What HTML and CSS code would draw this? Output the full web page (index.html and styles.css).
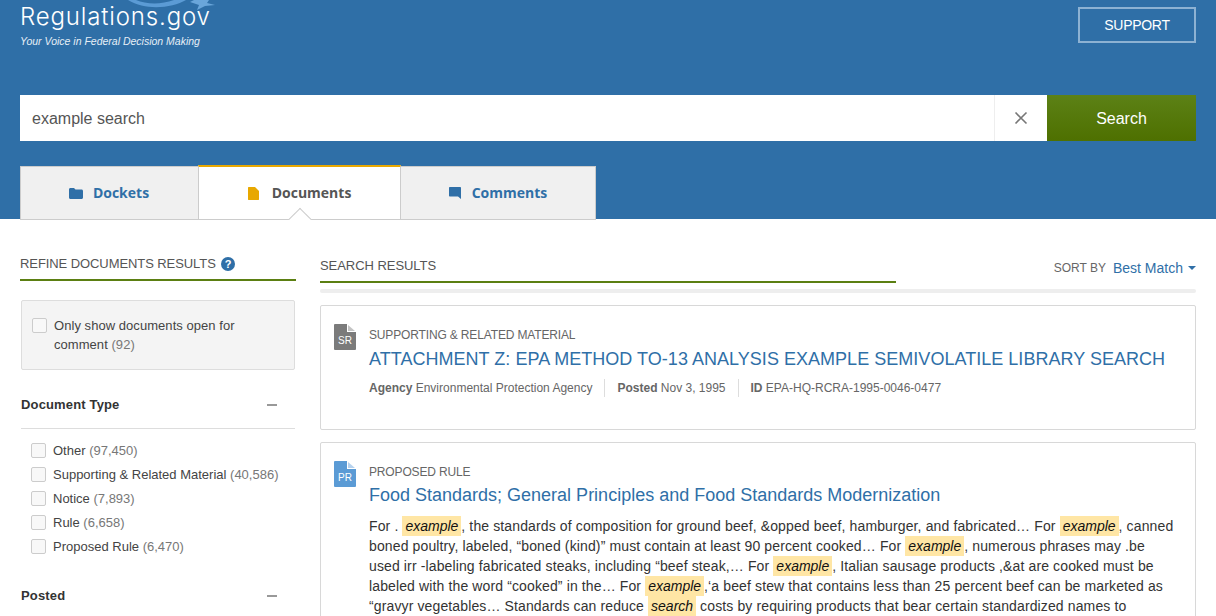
FILE: index.html
```html
<!DOCTYPE html>
<html lang="en">
<head>
<meta charset="utf-8">
<title>Regulations.gov</title>
<link rel="stylesheet" href="styles.css">
</head>
<body>
<header class="hero">
  <div class="topbar">
    <div class="logo">
      <svg class="logo-art" width="88" height="11" viewBox="0 0 88 11"><path d="M0 0H8C18 4 32 5 46 0H58C44 8 18 11 0 0Z" fill="#5b9bd5"/><path d="M66 0H81L79 3L87 5L77 6L69 10L71 5L62 2Z" fill="#6aa6da"/></svg>
      <div class="logo-name">Regulations.gov</div>
      <div class="logo-tag">Your Voice in Federal Decision Making</div>
    </div>
    <a class="support">SUPPORT</a>
  </div>
  <div class="searchbar">
    <div class="search-input">example search</div>
    <div class="search-clear"><svg width="14" height="14" viewBox="0 0 14 14"><path d="M1.500 1.500L12.500 12.500M12.500 1.500L1.500 12.500" stroke="#777" stroke-width="1.600" fill="none"/></svg></div>
    <div class="search-btn">Search</div>
  </div>
  <nav class="tabs">
    <a class="tab tab-dockets">
      <svg width="14" height="11" viewBox="0 0 14 11"><path d="M0 1.500C0 .7.6 0 1.400 0H5l1.500 1.600h6C13.400 1.600 14 2.300 14 3v6.500c0 .8-.6 1.500-1.500 1.500h-11C.6 11 0 10.300 0 9.500Z" fill="#2f6fa7"/></svg>
      <span class="tab-label">Dockets</span>
    </a>
    <a class="tab tab-active">
      <svg width="11" height="13" viewBox="0 0 11 13"><path d="M0 .5C0 .2.2 0 .5 0H7L11 4V12.500C11 12.800 10.800 13 10.500 13H.5C.2 13 0 12.800 0 12.500Z" fill="#e8a800"/></svg>
      <span class="tab-label">Documents</span>
    </a>
    <a class="tab tab-comments">
      <svg width="12" height="12" viewBox="0 0 12 12"><path d="M1 0H11C11.600 0 12 .4 12 1V12L9 9.500H1C.4 9.500 0 9.100 0 8.500V1C0 .4.4 0 1 0Z" fill="#2f6fa7"/></svg>
      <span class="tab-label">Comments</span>
    </a>
  </nav>
</header>
<main class="content">
  <aside class="sidebar">
    <h2 class="side-title">REFINE DOCUMENTS RESULTS
      <svg width="14" height="14" viewBox="0 0 14 14"><circle cx="7" cy="7" r="7" fill="#2f6fa7"/><text x="7" y="11" text-anchor="middle" class="help-mark">?</text></svg>
    </h2>
    <label class="open-box"><span class="check"></span><span>Only show documents open for comment <span class="count">(92)</span></span></label>
    <div class="facet-head"><span>Document Type</span><span class="minus"></span></div>
    <ul class="facet-list">
      <li><span class="check"></span><span>Other <span class="count">(97,450)</span></span></li>
      <li><span class="check"></span><span>Supporting &amp; Related Material <span class="count">(40,586)</span></span></li>
      <li><span class="check"></span><span>Notice <span class="count">(7,893)</span></span></li>
      <li><span class="check"></span><span>Rule <span class="count">(6,658)</span></span></li>
      <li><span class="check"></span><span>Proposed Rule <span class="count">(6,470)</span></span></li>
    </ul>
    <div class="facet-head facet-plain"><span>Posted</span><span class="minus"></span></div>
  </aside>
  <section class="results">
    <div class="results-head">
      <h2 class="results-title">SEARCH RESULTS</h2>
      <div class="sort"><span class="sort-label">SORT BY</span><a class="sort-value">Best Match</a><span class="caret"></span></div>
    </div>
    <div class="results-rule"></div>
    <article class="card card-short">
      <div class="doc-icon doc-sr"><span class="doc-code">SR</span></div>
      <div class="card-body">
        <div class="doc-type">SUPPORTING &amp; RELATED MATERIAL</div>
        <a class="doc-title">ATTACHMENT Z: EPA METHOD TO-13 ANALYSIS EXAMPLE SEMIVOLATILE LIBRARY SEARCH</a>
        <div class="meta">
          <span><b>Agency</b> Environmental Protection Agency</span>
          <span><b>Posted</b> Nov 3, 1995</span>
          <span><b>ID</b> EPA-HQ-RCRA-1995-0046-0477</span>
        </div>
      </div>
    </article>
    <article class="card">
      <div class="doc-icon doc-pr"><span class="doc-code">PR</span></div>
      <div class="card-body">
        <div class="doc-type">PROPOSED RULE</div>
        <a class="doc-title">Food Standards; General Principles and Food Standards Modernization</a>
        <p class="snippet">For . <mark>example</mark>, the standards of composition for ground beef, &amp;opped beef, hamburger, and fabricated… For <mark>example</mark>, canned boned poultry, labeled, “boned (kind)” must contain at least 90 percent cooked… For <mark>example</mark>, numerous phrases may .be used irr -labeling fabricated steaks, including “beef steak,… For <mark>example</mark>, Italian sausage products ,&amp;at are cooked must be labeled with the word “cooked” in the… For <mark>example</mark>,‘a beef stew that contains less than 25 percent beef can be marketed as “gravyr vegetables… Standards can reduce <mark>search</mark> costs by requiring products that bear certain standardized names to</p>
      </div>
    </article>
  </section>
</main>
</body>
</html>
```
FILE: styles.css
```css
* { box-sizing: border-box; }
html, body { margin: 0; height: 616px; overflow: hidden; }
body { font-family: "Liberation Sans", Arial, sans-serif; color: #333; background: #fff; }
a { color: inherit; text-decoration: none; }
h2, ul, p { margin: 0; padding: 0; }
ul { list-style: none; }

.hero { background: #2f6fa7; height: 219px; padding: 0 20px; }
.topbar { display: flex; justify-content: space-between; height: 95px; }
.logo { position: relative; color: #fff; padding-top: 1px; }
.logo-art { position: absolute; left: 108px; top: 0; }
.logo-name { position: relative; font-family: "Inter", sans-serif; font-weight: 300; font-size: 24px; letter-spacing: .85px; line-height: 32px; }
.logo-tag { font-size: 10.500px; font-style: italic; line-height: 13px; margin-top: 2px; color: #e6eef6; }
.support { margin-top: 7px; width: 118px; height: 36px; border: 2px solid #8db2d3; color: #fff; font-size: 14px; letter-spacing: -.3px; display: flex; align-items: center; justify-content: center; }

.searchbar { display: flex; height: 46px; }
.search-input { flex: 1; background: #fff; font-size: 16px; color: #555; display: flex; align-items: center; padding: 2px 0 0 12px; }
.search-clear { width: 53px; background: #fff; border-left: 1px solid #eee; display: flex; align-items: center; justify-content: center; }
.search-btn { width: 149px; background: linear-gradient(#5c8116, #4e7000); color: #fff; font-size: 16px; padding-top: 2px; display: flex; align-items: center; justify-content: center; }

.tabs { display: flex; margin-top: 25px; }
.tab { height: 54px; background: #f0f0f0; border: 1px solid #ccc; display: flex; align-items: center; justify-content: center; gap: 10px; color: #2f6fa7; font-family: "Open Sans", sans-serif; font-weight: 700; font-size: 14px; }
.tab-label { margin-bottom: 2px; }
.tab-dockets { width: 178px; border-right: 0; padding-right: 1px; }
.tab-active { width: 203px; height: 55px; margin-top: -1px; background: #fff; color: #555; border-top: 2px solid #e8a800; position: relative; gap: 13px; }
.tab-active::after { content: ""; position: absolute; left: 93px; bottom: -8px; width: 15px; height: 15px; background: #fff; border-left: 1px solid #ccc; border-top: 1px solid #ccc; transform: rotate(45deg); }
.tab-comments { width: 195px; gap: 11px; border-left: 0; }

.content { display: grid; grid-template-columns: 276px 876px; column-gap: 24px; padding: 0 20px; }
.side-title { font-weight: 400; font-size: 13px; letter-spacing: -.08px; line-height: 16px; color: #555; padding: 37px 0 7px; border-bottom: 2px solid #5b7f12; display: flex; align-items: center; gap: 5px; }
.help-mark { font: 700 11px "Liberation Sans", sans-serif; fill: #fff; }

.open-box { display: flex; gap: 7px; margin: 19px 1px 0; padding: 15px 10px; height: 70px; background: #f4f4f4; border: 1px solid #ddd; border-radius: 2px; font-size: 13px; line-height: 19px; letter-spacing: .05px; color: #444; }
.check { flex: none; width: 15px; height: 15px; border: 1px solid #ccc; border-radius: 2px; background: #f8f8f8; margin-top: 2px; }
.count { color: #777; }

.facet-head { display: flex; justify-content: space-between; align-items: center; margin: 26px 1px 0; padding-bottom: 14px; border-bottom: 1px solid #ddd; font-size: 13px; letter-spacing: .15px; line-height: 18px; font-weight: 700; color: #333; }
.facet-plain { border-bottom: 0; margin-top: 28px; }
.minus { width: 10px; height: 1.500px; background: #999; margin-right: 18px; }
.facet-list { padding: 10px 0 0 11px; }
.facet-list li { display: flex; gap: 7px; height: 24px; font-size: 13px; line-height: 24px; color: #444; }
.facet-list .check { margin-top: 4px; }

.results-head { display: flex; justify-content: space-between; align-items: flex-end; }
.results-title { width: 576px; font-weight: 400; font-size: 13px; letter-spacing: -.05px; line-height: 16px; color: #555; padding: 39px 0 7px; border-bottom: 2px solid #5b7f12; }
.sort { display: flex; align-items: center; height: 20px; margin-bottom: 5px; }
.sort-label { font-size: 12px; color: #666; margin-right: 8px; }
.sort-value { font-size: 14px; color: #2f6fa7; margin-left: -1px; }
.caret { margin-left: 5px; border: 4px solid transparent; border-top-color: #2f6fa7; border-bottom: 0; }
.results-rule { height: 4px; margin-top: 6px; background: #eee; border-radius: 2px; }

.card { display: flex; gap: 13px; margin-top: 12px; padding: 18px 20px 18px 13px; border: 1px solid #d8d8d8; border-radius: 2px; }
.card-short { height: 125px; }
.doc-icon { flex: none; width: 22px; height: 26px; position: relative; color: #fff; font-size: 10px; display: flex; align-items: flex-end; justify-content: center; padding-bottom: 4px; }
.doc-icon::before { content: ""; position: absolute; inset: 0; border-radius: 1px; clip-path: polygon(0 0, 13px 0, 13px 8px, 22px 8px, 22px 26px, 0 26px); }
.doc-icon::after { content: ""; position: absolute; left: 14px; top: 1px; width: 7px; height: 6px; clip-path: polygon(0 0, 100% 100%, 0 100%); }
.doc-sr::before { background: #7b7b7b; }
.doc-sr::after { background: #c4c4c4; }
.doc-pr::before { background: #5b9bd5; }
.doc-pr::after { background: #b6d2ee; }
.doc-code { position: relative; }
.doc-type { font-size: 12px; letter-spacing: -.15px; line-height: 16px; color: #666; margin-top: 3px; }
.doc-title { display: block; font-size: 18px; line-height: 24px; color: #2f6fa7; margin-top: 3px; }
.card-short .doc-title { letter-spacing: .03px; margin-top: 4px; }
.meta { display: flex; margin-top: 8px; font-size: 12px; line-height: 18px; color: #666; }
.meta span { padding-right: 12px; margin-right: 12px; border-right: 1px solid #ddd; }
.meta span:last-child { border: 0; }
.snippet { font-size: 14px; letter-spacing: .125px; line-height: 20px; margin-top: 9px; color: #333; }
mark { background: #ffe6a5; font-style: italic; color: #111; letter-spacing: 0; padding: 2px 3px; }
```
